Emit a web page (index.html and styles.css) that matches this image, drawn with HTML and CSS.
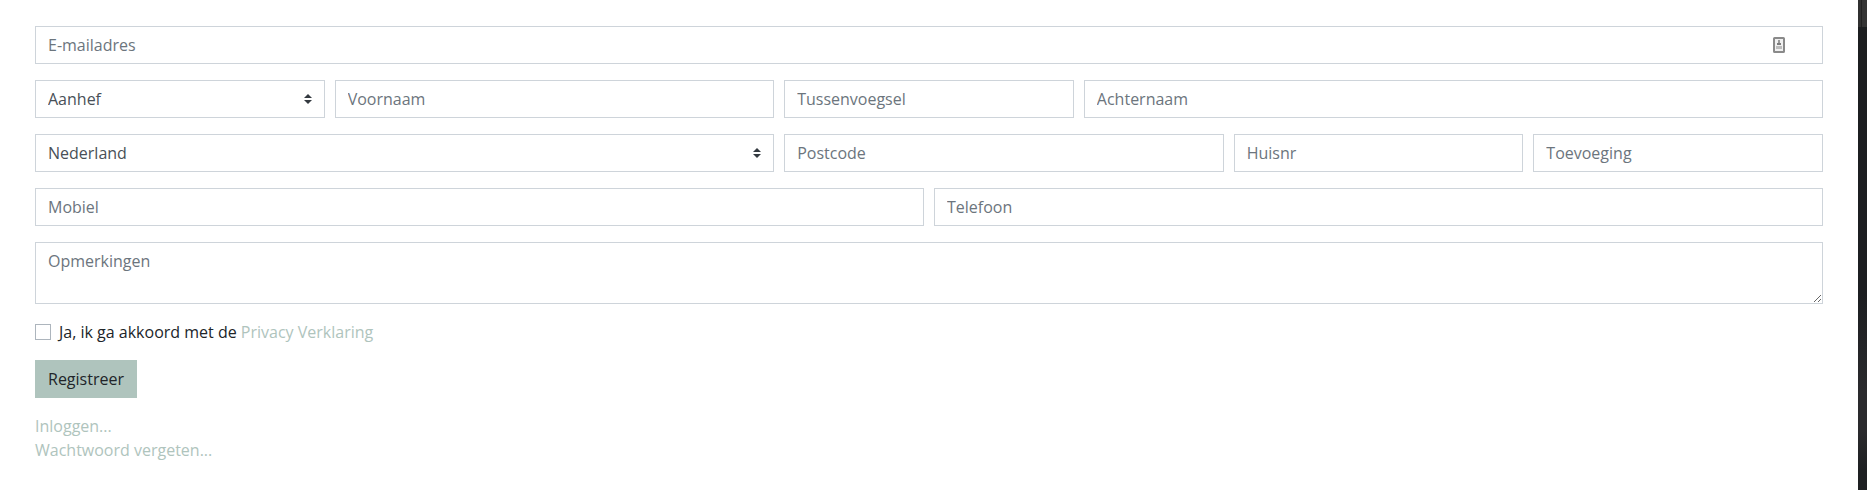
FILE: index.html
```html
<!DOCTYPE html>
<html lang="nl">
<head>
<meta charset="utf-8">
<title>Registreer</title>
<link rel="stylesheet" href="styles.css">
</head>
<body>
<div class="page">
  <form class="panel">
    <div class="form-row">
      <div class="col-12">
        <input class="form-control" type="text" placeholder="E-mailadres">
        <svg class="autofill" viewBox="0 0 12 16" width="12" height="16">
          <rect x="1" y="1" width="10" height="14" rx=".6" fill="#f0f0f0" stroke="#8a8a8a" stroke-width="2"/>
          <rect x="5" y="3" width="2" height="3" fill="#9a9a9a"/>
          <rect x="4" y="6" width="4" height="2" fill="#7c7c7c"/>
          <rect x="3" y="9" width="6" height="3" fill="#bdbdbd"/>
        </svg>
      </div>
    </div>
    <div class="form-row">
      <div class="col-2"><select class="form-control custom-select"><option>Aanhef</option></select><svg class="caret" viewBox="0 0 4 5" width="8" height="10"><path d="M2 0L0 2h4zm0 5L0 3h4z"/></svg></div>
      <div class="col-3"><input class="form-control" type="text" placeholder="Voornaam"></div>
      <div class="col-2"><input class="form-control" type="text" placeholder="Tussenvoegsel"></div>
      <div class="col-5"><input class="form-control" type="text" placeholder="Achternaam"></div>
    </div>
    <div class="form-row">
      <div class="col-5"><select class="form-control custom-select"><option>Nederland</option></select><svg class="caret" viewBox="0 0 4 5" width="8" height="10"><path d="M2 0L0 2h4zm0 5L0 3h4z"/></svg></div>
      <div class="col-3"><input class="form-control" type="text" placeholder="Postcode"></div>
      <div class="col-2"><input class="form-control" type="text" placeholder="Huisnr"></div>
      <div class="col-2"><input class="form-control" type="text" placeholder="Toevoeging"></div>
    </div>
    <div class="form-row">
      <div class="col-6"><input class="form-control" type="text" placeholder="Mobiel"></div>
      <div class="col-6"><input class="form-control" type="text" placeholder="Telefoon"></div>
    </div>
    <div class="form-row">
      <div class="col-12"><textarea class="form-control" rows="2" placeholder="Opmerkingen"></textarea></div>
    </div>
    <label class="check"><input class="check-box" type="checkbox"><span>Ja, ik ga akkoord met de <a class="link" href="#">Privacy Verklaring</a></span></label>
    <button class="btn" type="button">Registreer</button>
    <div class="links">
      <a class="link" href="#">Inloggen...</a>
      <a class="link" href="#">Wachtwoord vergeten...</a>
    </div>
  </form>
  <div class="backdrop"><div class="backdrop-top"></div></div>
</div>
</body>
</html>
```
FILE: styles.css
```css
*, *::before, *::after { box-sizing: border-box; }
body {
  margin: 0;
  background: #fff;
  color: #212529;
  font: 400 16px/24px "Open Sans", sans-serif;
  overflow: hidden;
}
.page { display: flex; height: 490px; }
.panel { flex: 1; padding: 26px 35px 0; }
.backdrop {
  flex: 0 0 9px;
  background: linear-gradient(#1c1e20 0, #1c1e21 60%, #2a2a2d 80%, #2a2a2d 88%, #1e2022 96%);
}
.backdrop-top {
  height: 27px;
  background: linear-gradient(90deg, #303030 3px, #212121 3px, #212121 4px, #343434 4px);
}
.form-row {
  display: grid;
  grid-template-columns: repeat(12, 1fr);
  margin: 0 -5px 16px;
}
.form-row > div { position: relative; padding: 0 5px; display: flex; min-width: 0; }
.col-2 { grid-column: span 2; }
.col-3 { grid-column: span 3; }
.col-5 { grid-column: span 5; }
.col-6 { grid-column: span 6; }
.col-12 { grid-column: span 12; }
.form-control {
  display: block;
  width: 100%;
  height: 38px;
  margin: 0;
  padding: 6px 12px;
  border: 1px solid #ced4da;
  border-radius: 0;
  background: #fff;
  color: #495057;
  font: inherit;
  outline: 0;
}
.form-control::placeholder { color: #6c757d; opacity: 1; }
textarea.form-control { height: 62px; overflow: auto; resize: vertical; }
.custom-select { appearance: none; }
.caret { position: absolute; right: 18px; top: 14px; pointer-events: none; fill: #343a40; }
.autofill { position: absolute; right: 43px; top: 11px; }
.check { display: flex; align-items: center; gap: 8px; height: 24px; margin-bottom: 16px; }
.check-box {
  appearance: none;
  width: 16px;
  height: 16px;
  margin: 0;
  border: 1px solid #adb5bd;
  background: #fff;
}
.btn {
  display: block;
  height: 38px;
  margin: 0 0 16px;
  padding: 6px 12px;
  border: 1px solid #afc4bd;
  background: #afc4bd;
  color: #212529;
  font: inherit;
}
.links { display: flex; flex-direction: column; align-items: flex-start; }
.link { color: #afc4bd; text-decoration: none; }
```
